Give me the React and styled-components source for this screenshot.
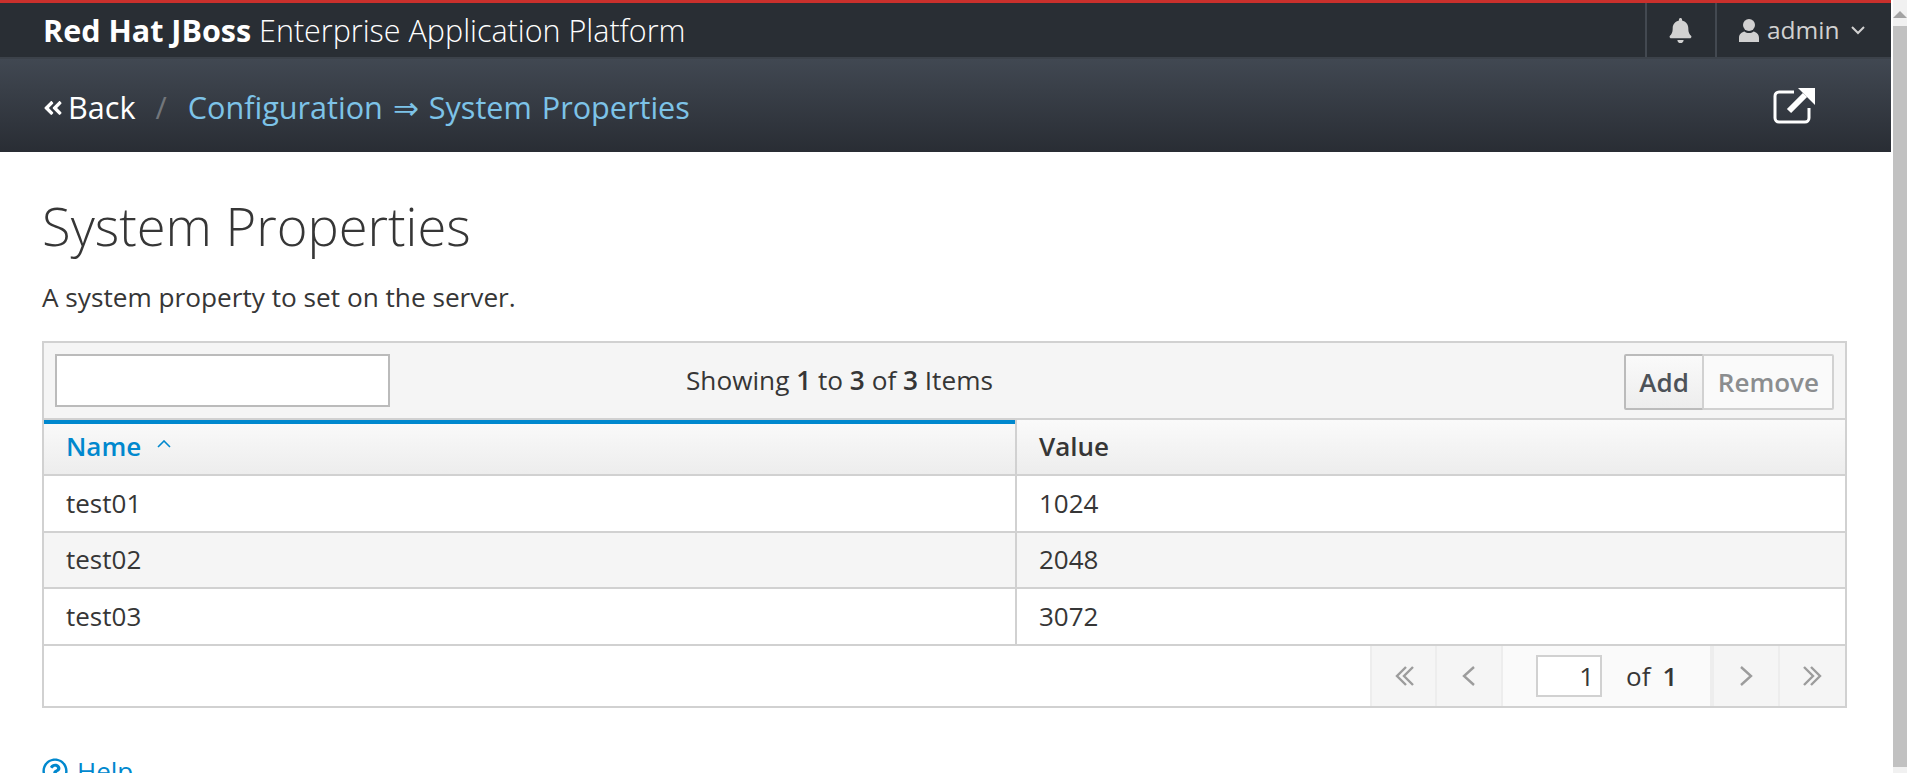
import React from 'react';
import styled, { createGlobalStyle } from 'styled-components';
import { FaBell, FaAngleDoubleLeft, FaRegQuestionCircle } from 'react-icons/fa';

const GlobalStyle = createGlobalStyle`
  html, body {
    margin: 0;
    height: 100%;
    overflow: hidden;
    background: #fff;
  }
  body {
    font-family: "Open Sans", "Liberation Sans", sans-serif;
    color: #363636;
  }
  * { box-sizing: border-box; }
`;

const Window = styled.div`
  display: flex;
  height: 773px;
  overflow: hidden;
`;

const Page = styled.div`
  width: 1891px;
  flex: none;
`;

const Scrollbar = styled.div`
  flex: 1;
  display: flex;
  flex-direction: column;
  margin-left: 2px;
  background: #f1f1f1;
`;

const ScrollUp = styled.div`
  height: 26px;
  display: flex;
  align-items: center;
  justify-content: center;
  padding-top: 2px;
  background: #f1f1f1;
  &::before {
    content: '';
    border-left: 7px solid transparent;
    border-right: 7px solid transparent;
    border-bottom: 7px solid #a3a3a3;
  }
`;

const ScrollThumb = styled.div`
  height: 741px;
  background: #c1c1c1;
`;

const Masthead = styled.header`
  height: 59px;
  display: flex;
  align-items: stretch;
  justify-content: space-between;
  background: #292e34;
  border-top: 3px solid #c9302c;
  border-bottom: 2px solid #3c424a;
`;

const Brand = styled.div`
  padding-left: 43px;
  font-size: 30.5px;
  font-weight: 300;
  line-height: 54px;
  color: #fff;
  white-space: nowrap;
  b { font-weight: 700; }
`;

const Utility = styled.div`
  display: flex;
`;

const UtilityItem = styled.div`
  display: flex;
  align-items: center;
  height: 100%;
  border-left: 2px solid #434951;
  color: #d1d1d1;
  width: ${p => p.$width};
  padding-left: ${p => p.$pad};
  font-size: 24.5px;
`;

const UserName = styled.span`
  margin-left: 8px;
  line-height: 1;
`;

const Subbar = styled.div`
  height: 93px;
  display: flex;
  align-items: center;
  justify-content: space-between;
  padding: 0 76px 0 42px;
  background: linear-gradient(to bottom, #414852, #292d34);
  font-size: 30.6px;
`;

const Crumbs = styled.div`
  display: flex;
  align-items: center;
  padding-top: 2px;
  white-space: nowrap;
`;

const BackLink = styled.a`
  display: flex;
  align-items: center;
  gap: 4px;
  color: #fff;
  svg { font-size: 22px; margin-top: 2px; }
`;

const Slash = styled.span`
  margin: 0 21px 0 20px;
  color: #72767b;
`;

const CrumbLink = styled.a`
  color: #7dc3e8;
  word-spacing: 2px;
`;

const PageBody = styled.main`
  padding: 36px 44px 0 42px;
`;

const Title = styled.h1`
  margin: 0;
  font-size: 52.5px;
  font-weight: 300;
  line-height: 76px;
  color: #363636;
`;

const Description = styled.p`
  margin: 15px 0 0;
  font-size: 26.2px;
  line-height: 36px;
`;

const DataPanel = styled.section`
  margin-top: 26px;
  border: 2px solid #d1d1d1;
`;

const Toolbar = styled.div`
  height: 75px;
  display: grid;
  grid-template-columns: 631px auto 1fr;
  align-items: center;
  padding: 0 11px;
  background: #f5f5f5;
`;

const SearchInput = styled.input`
  width: 335px;
  height: 53px;
  border: 2px solid #bbb;
  background: #fff;
  outline: none;
`;

const Summary = styled.div`
  padding-bottom: 2px;
  font-size: 26.2px;
  b { font-weight: 600; }
`;

const ButtonGroup = styled.div`
  justify-self: end;
  align-self: start;
  display: flex;
  margin-top: 11px;
`;

const ToolButton = styled.button`
  height: 56px;
  padding: ${p => p.$pad};
  margin-left: ${p => (p.$joined ? '-2px' : '0')};
  font-family: inherit;
  font-size: 26px;
  font-weight: 600;
  color: ${p => (p.disabled ? '#8b8d8f' : '#4d5258')};
  background: ${p => (p.disabled ? '#fafafa' : 'linear-gradient(to bottom, #fafafa, #ededed)')};
  border: 2px solid ${p => (p.disabled ? '#d1d1d1' : '#bbb')};
  border-radius: 2px;
`;

const Table = styled.table`
  width: 100%;
  border-collapse: collapse;
  table-layout: fixed;
`;

const HeadCell = styled.th`
  height: 56px;
  padding: 0 0 3px 22px;
  text-align: left;
  font-size: 26px;
  font-weight: 600;
  color: ${p => (p.$sorted ? '#0088ce' : '#363636')};
  background: linear-gradient(to bottom, #fafafa, #ededed);
  border-top: 2px solid #d1d1d1;
  border-bottom: 2px solid #d1d1d1;
  box-shadow: ${p => (p.$sorted ? 'inset 0 4px 0 #0088ce' : 'none')};
  & + & { border-left: 2px solid #d1d1d1; }
`;

const SortCaret = styled.svg`
  width: 14px;
  height: 8px;
  margin-left: 16px;
  vertical-align: 8px;
`;

const Row = styled.tr`
  background: ${p => (p.$striped ? '#f5f5f5' : '#fff')};
`;

const Cell = styled.td`
  height: 56.5px;
  padding: 0 0 1px 22px;
  font-size: 26px;
  border-bottom: 2px solid #d1d1d1;
  & + & { border-left: 2px solid #d1d1d1; }
`;

const Pager = styled.div`
  height: 60px;
  display: flex;
  justify-content: flex-end;
`;

const PagerButton = styled.div`
  width: ${p => p.$width};
  display: flex;
  align-items: center;
  justify-content: center;
  background: #f5f5f5;
  border-left: 2px solid #ededed;
`;

const PagerCurrent = styled.div`
  width: 211px;
  display: flex;
  align-items: center;
  padding-left: 33px;
  background: #fafafa;
  border-left: 2px solid #ededed;
  border-right: 2px solid #ededed;
  font-size: 26px;
  b { font-weight: 600; margin-left: 12px; }
`;

const PageInput = styled.input`
  width: 66px;
  height: 42px;
  margin-right: 24px;
  padding: 0 6px 0 0;
  text-align: right;
  font-family: inherit;
  font-size: 26px;
  color: #363636;
  background: #fff;
  border: 2px solid #d1d1d1;
  outline: none;
`;

const HelpLink = styled.a`
  display: flex;
  align-items: center;
  margin-top: 47px;
  color: #0088ce;
  font-size: 26px;
  line-height: 32px;
  svg { margin-right: 9px; font-size: 26px; }
`;

const Chevrons = ({ dir, double }) => {
  const flip = dir === 'left' ? 'scale(-1 1) translate(-22 0)' : undefined;
  return (
    <svg width="22" height="22" viewBox="0 0 22 22" fill="none" stroke="#9c9c9c" strokeWidth="2.4">
      <g transform={flip}>
        {double ? (
          <>
            <polyline points="2,2 11,11 2,20" />
            <polyline points="9,2 18,11 9,20" />
          </>
        ) : (
          <polyline points="6,2 16,11 6,20" />
        )}
      </g>
    </svg>
  );
};

const UserIcon = () => (
  <svg width="20" height="23" viewBox="0 0 20 23" fill="#d1d1d1">
    <circle cx="10" cy="6" r="6" />
    <path d="M0 23v-4c0-4 3-6 5.500-6.500 1.200 1 2.800 1.500 4.500 1.500s3.300-.5 4.500-1.500C17 13 20 15 20 19v4z" />
  </svg>
);

const rows = [
  { name: 'test01', value: '1024' },
  { name: 'test02', value: '2048' },
  { name: 'test03', value: '3072' },
];

const App = () => (
  <Window>
    <GlobalStyle />
    <Page>
      <Masthead>
        <Brand><b>Red Hat JBoss</b> Enterprise Application Platform</Brand>
        <Utility>
          <UtilityItem $width="70px" $pad="21px"><FaBell size={25} /></UtilityItem>
          <UtilityItem $width="176px" $pad="22px">
            <UserIcon />
            <UserName>admin</UserName>
            <svg width="16" height="10" viewBox="0 0 16 10" fill="none" stroke="#d1d1d1" strokeWidth="2" style={{ marginLeft: 10 }}>
              <polyline points="2,2 8,8 14,2" />
            </svg>
          </UtilityItem>
        </Utility>
      </Masthead>
      <Subbar>
        <Crumbs>
          <BackLink><FaAngleDoubleLeft />Back</BackLink>
          <Slash>/</Slash>
          <CrumbLink>Configuration ⇒ System Properties</CrumbLink>
        </Crumbs>
        <svg width="42" height="36" viewBox="0 0 42 36" fill="none">
          <path d="M21 4H6a4 4 0 0 0-4 4v22a4 4 0 0 0 4 4h26a4 4 0 0 0 4-4V20" stroke="#fff" strokeWidth="3" />
          <path d="M16 23L32 7" stroke="#fff" strokeWidth="6" />
          <path d="M25 0h17v17z" fill="#fff" />
        </svg>
      </Subbar>
      <PageBody>
        <Title>System Properties</Title>
        <Description>A system property to set on the server.</Description>
        <DataPanel>
          <Toolbar>
            <SearchInput />
            <Summary>Showing <b>1</b> to <b>3</b> of <b>3</b> Items</Summary>
            <ButtonGroup>
              <ToolButton $pad="0 13px">Add</ToolButton>
              <ToolButton $pad="0 13px 0 14px" $joined disabled>Remove</ToolButton>
            </ButtonGroup>
          </Toolbar>
          <Table>
            <colgroup>
              <col width="972" />
              <col />
            </colgroup>
            <thead>
              <tr>
                <HeadCell $sorted>
                  Name
                  <SortCaret viewBox="0 0 14 8" fill="none" stroke="#0088ce" strokeWidth="1.6">
                    <polyline points="1,7 7,1 13,7" />
                  </SortCaret>
                </HeadCell>
                <HeadCell>Value</HeadCell>
              </tr>
            </thead>
            <tbody>
              {rows.map((row, i) => (
                <Row key={row.name} $striped={i === 1}>
                  <Cell>{row.name}</Cell>
                  <Cell>{row.value}</Cell>
                </Row>
              ))}
            </tbody>
          </Table>
          <Pager>
            <PagerButton $width="65px"><Chevrons dir="left" double /></PagerButton>
            <PagerButton $width="66px"><Chevrons dir="left" /></PagerButton>
            <PagerCurrent>
              <PageInput defaultValue="1" />
              of <b>1</b>
            </PagerCurrent>
            <PagerButton $width="66px"><Chevrons dir="right" /></PagerButton>
            <PagerButton $width="67px"><Chevrons dir="right" double /></PagerButton>
          </Pager>
        </DataPanel>
        <HelpLink><FaRegQuestionCircle />Help</HelpLink>
      </PageBody>
    </Page>
    <Scrollbar>
      <ScrollUp />
      <ScrollThumb />
    </Scrollbar>
  </Window>
);

export default App;
